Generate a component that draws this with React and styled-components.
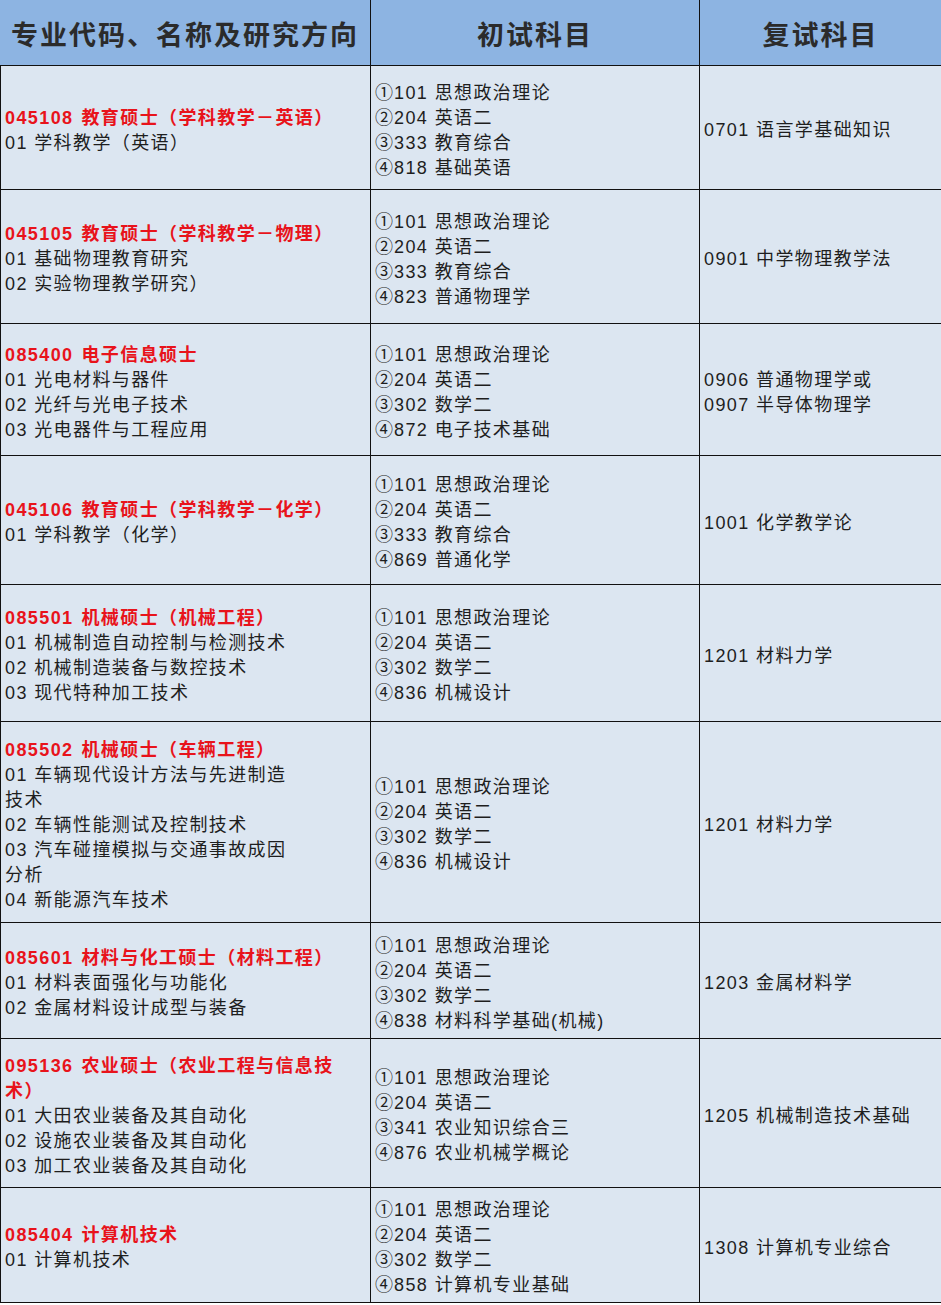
import React from "react";
import styled, { createGlobalStyle } from "styled-components";

const GlobalStyle = createGlobalStyle`
  html, body {
    margin: 0;
    padding: 0;
    background: #ffffff;
  }
  body {
    font-family: "Liberation Sans", "Noto Sans CJK SC", sans-serif;
  }
`;

const rows = [
  {
    code: "045108",
    name: ["教育硕士（学科教学－英语）"],
    items: ["01 学科教学（英语）"],
    exams: [["①", "101 思想政治理论"], ["②", "204 英语二"], ["③", "333 教育综合"], ["④", "818 基础英语"]],
    retest: ["0701 语言学基础知识"],
    height: 124,
  },
  {
    code: "045105",
    name: ["教育硕士（学科教学－物理）"],
    items: ["01 基础物理教育研究", "02 实验物理教学研究）"],
    exams: [["①", "101 思想政治理论"], ["②", "204 英语二"], ["③", "333 教育综合"], ["④", "823 普通物理学"]],
    retest: ["0901 中学物理教学法"],
    height: 134,
  },
  {
    code: "085400",
    name: ["电子信息硕士"],
    items: ["01 光电材料与器件", "02 光纤与光电子技术", "03 光电器件与工程应用"],
    exams: [["①", "101 思想政治理论"], ["②", "204 英语二"], ["③", "302 数学二"], ["④", "872 电子技术基础"]],
    retest: ["0906 普通物理学或", "0907 半导体物理学"],
    height: 132,
  },
  {
    code: "045106",
    name: ["教育硕士（学科教学－化学）"],
    items: ["01 学科教学（化学）"],
    exams: [["①", "101 思想政治理论"], ["②", "204 英语二"], ["③", "333 教育综合"], ["④", "869 普通化学"]],
    retest: ["1001 化学教学论"],
    height: 129,
  },
  {
    code: "085501",
    name: ["机械硕士（机械工程）"],
    items: ["01 机械制造自动控制与检测技术", "02 机械制造装备与数控技术", "03 现代特种加工技术"],
    exams: [["①", "101 思想政治理论"], ["②", "204 英语二"], ["③", "302 数学二"], ["④", "836 机械设计"]],
    retest: ["1201 材料力学"],
    height: 137,
  },
  {
    code: "085502",
    name: ["机械硕士（车辆工程）"],
    items: [
      "01 车辆现代设计方法与先进制造",
      "技术",
      "02 车辆性能测试及控制技术",
      "03 汽车碰撞模拟与交通事故成因",
      "分析",
      "04 新能源汽车技术",
    ],
    exams: [["①", "101 思想政治理论"], ["②", "204 英语二"], ["③", "302 数学二"], ["④", "836 机械设计"]],
    retest: ["1201 材料力学"],
    height: 201,
  },
  {
    code: "085601",
    name: ["材料与化工硕士（材料工程）"],
    items: ["01 材料表面强化与功能化", "02 金属材料设计成型与装备"],
    exams: [["①", "101 思想政治理论"], ["②", "204 英语二"], ["③", "302 数学二"], ["④", "838 材料科学基础(机械)"]],
    retest: ["1203 金属材料学"],
    height: 116,
  },
  {
    code: "095136",
    name: ["农业硕士（农业工程与信息技", "术）"],
    items: ["01 大田农业装备及其自动化", "02 设施农业装备及其自动化", "03 加工农业装备及其自动化"],
    exams: [["①", "101 思想政治理论"], ["②", "204 英语二"], ["③", "341 农业知识综合三"], ["④", "876 农业机械学概论"]],
    retest: ["1205 机械制造技术基础"],
    height: 149,
  },
  {
    code: "085404",
    name: ["计算机技术"],
    items: ["01 计算机技术"],
    exams: [["①", "101 思想政治理论"], ["②", "204 英语二"], ["③", "302 数学二"], ["④", "858 计算机专业基础"]],
    retest: ["1308 计算机专业综合"],
    height: 115,
  },
];

const App = () => (
  <>
    <GlobalStyle />
    <Table>
      <HeadCell>专业代码、名称及研究方向</HeadCell>
      <HeadCell>初试科目</HeadCell>
      <HeadCell $last>复试科目</HeadCell>
      {rows.map((row) => (
        <React.Fragment key={row.code}>
          <Cell $h={row.height} $first>
            {row.name.map((t, i) => (
              <TitleLine key={t}>
                {i === 0 && <Code>{row.code}</Code>}
                {t}
              </TitleLine>
            ))}
            {row.items.map((t) => (
              <Line key={t}>{t}</Line>
            ))}
          </Cell>
          <Cell $h={row.height}>
            {row.exams.map(([mark, text]) => (
              <Line key={text}>
                <Circled>{mark}</Circled>
                {text}
              </Line>
            ))}
          </Cell>
          <Cell $h={row.height} $last>
            {row.retest.map((t) => (
              <Line key={t}>{t}</Line>
            ))}
          </Cell>
        </React.Fragment>
      ))}
    </Table>
  </>
);

export default App;

const Table = styled.div`
  width: 941px;
  display: grid;
  grid-template-columns: 371px 329px 241px;
  background: #dce6f1;
`;

const HeadCell = styled.div`
  height: 66px;
  box-sizing: border-box;
  background: #8db4e2;
  border-right: ${({ $last }) => ($last ? "none" : "1px solid #111")};
  border-bottom: 1px solid #111;
  display: flex;
  align-items: center;
  justify-content: center;
  padding-top: 2px;
  font-size: 27px;
  font-weight: bold;
  letter-spacing: 2px;
  color: #2b2b2b;
  white-space: nowrap;
`;

const Cell = styled.div`
  height: ${({ $h }) => $h}px;
  box-sizing: border-box;
  border-left: ${({ $first }) => ($first ? "1px solid #111" : "none")};
  border-right: ${({ $last }) => ($last ? "none" : "1px solid #111")};
  border-bottom: 1px solid #111;
  display: flex;
  flex-direction: column;
  justify-content: center;
  padding: 6px 4px 0;
  font-size: 18px;
  letter-spacing: 1.4px;
  color: #1e1e1e;
`;

const Line = styled.div`
  height: 25px;
  line-height: 25px;
  white-space: pre;
`;

const Circled = styled.span`
  line-height: 1;
  margin-right: 1px;
  font-family: "Noto Sans CJK SC", sans-serif;
  letter-spacing: 0;
`;

const TitleLine = styled(Line)`
  color: #e8131b;
  font-weight: bold;
`;

const Code = styled.span`
  margin-right: 8px;
`;
